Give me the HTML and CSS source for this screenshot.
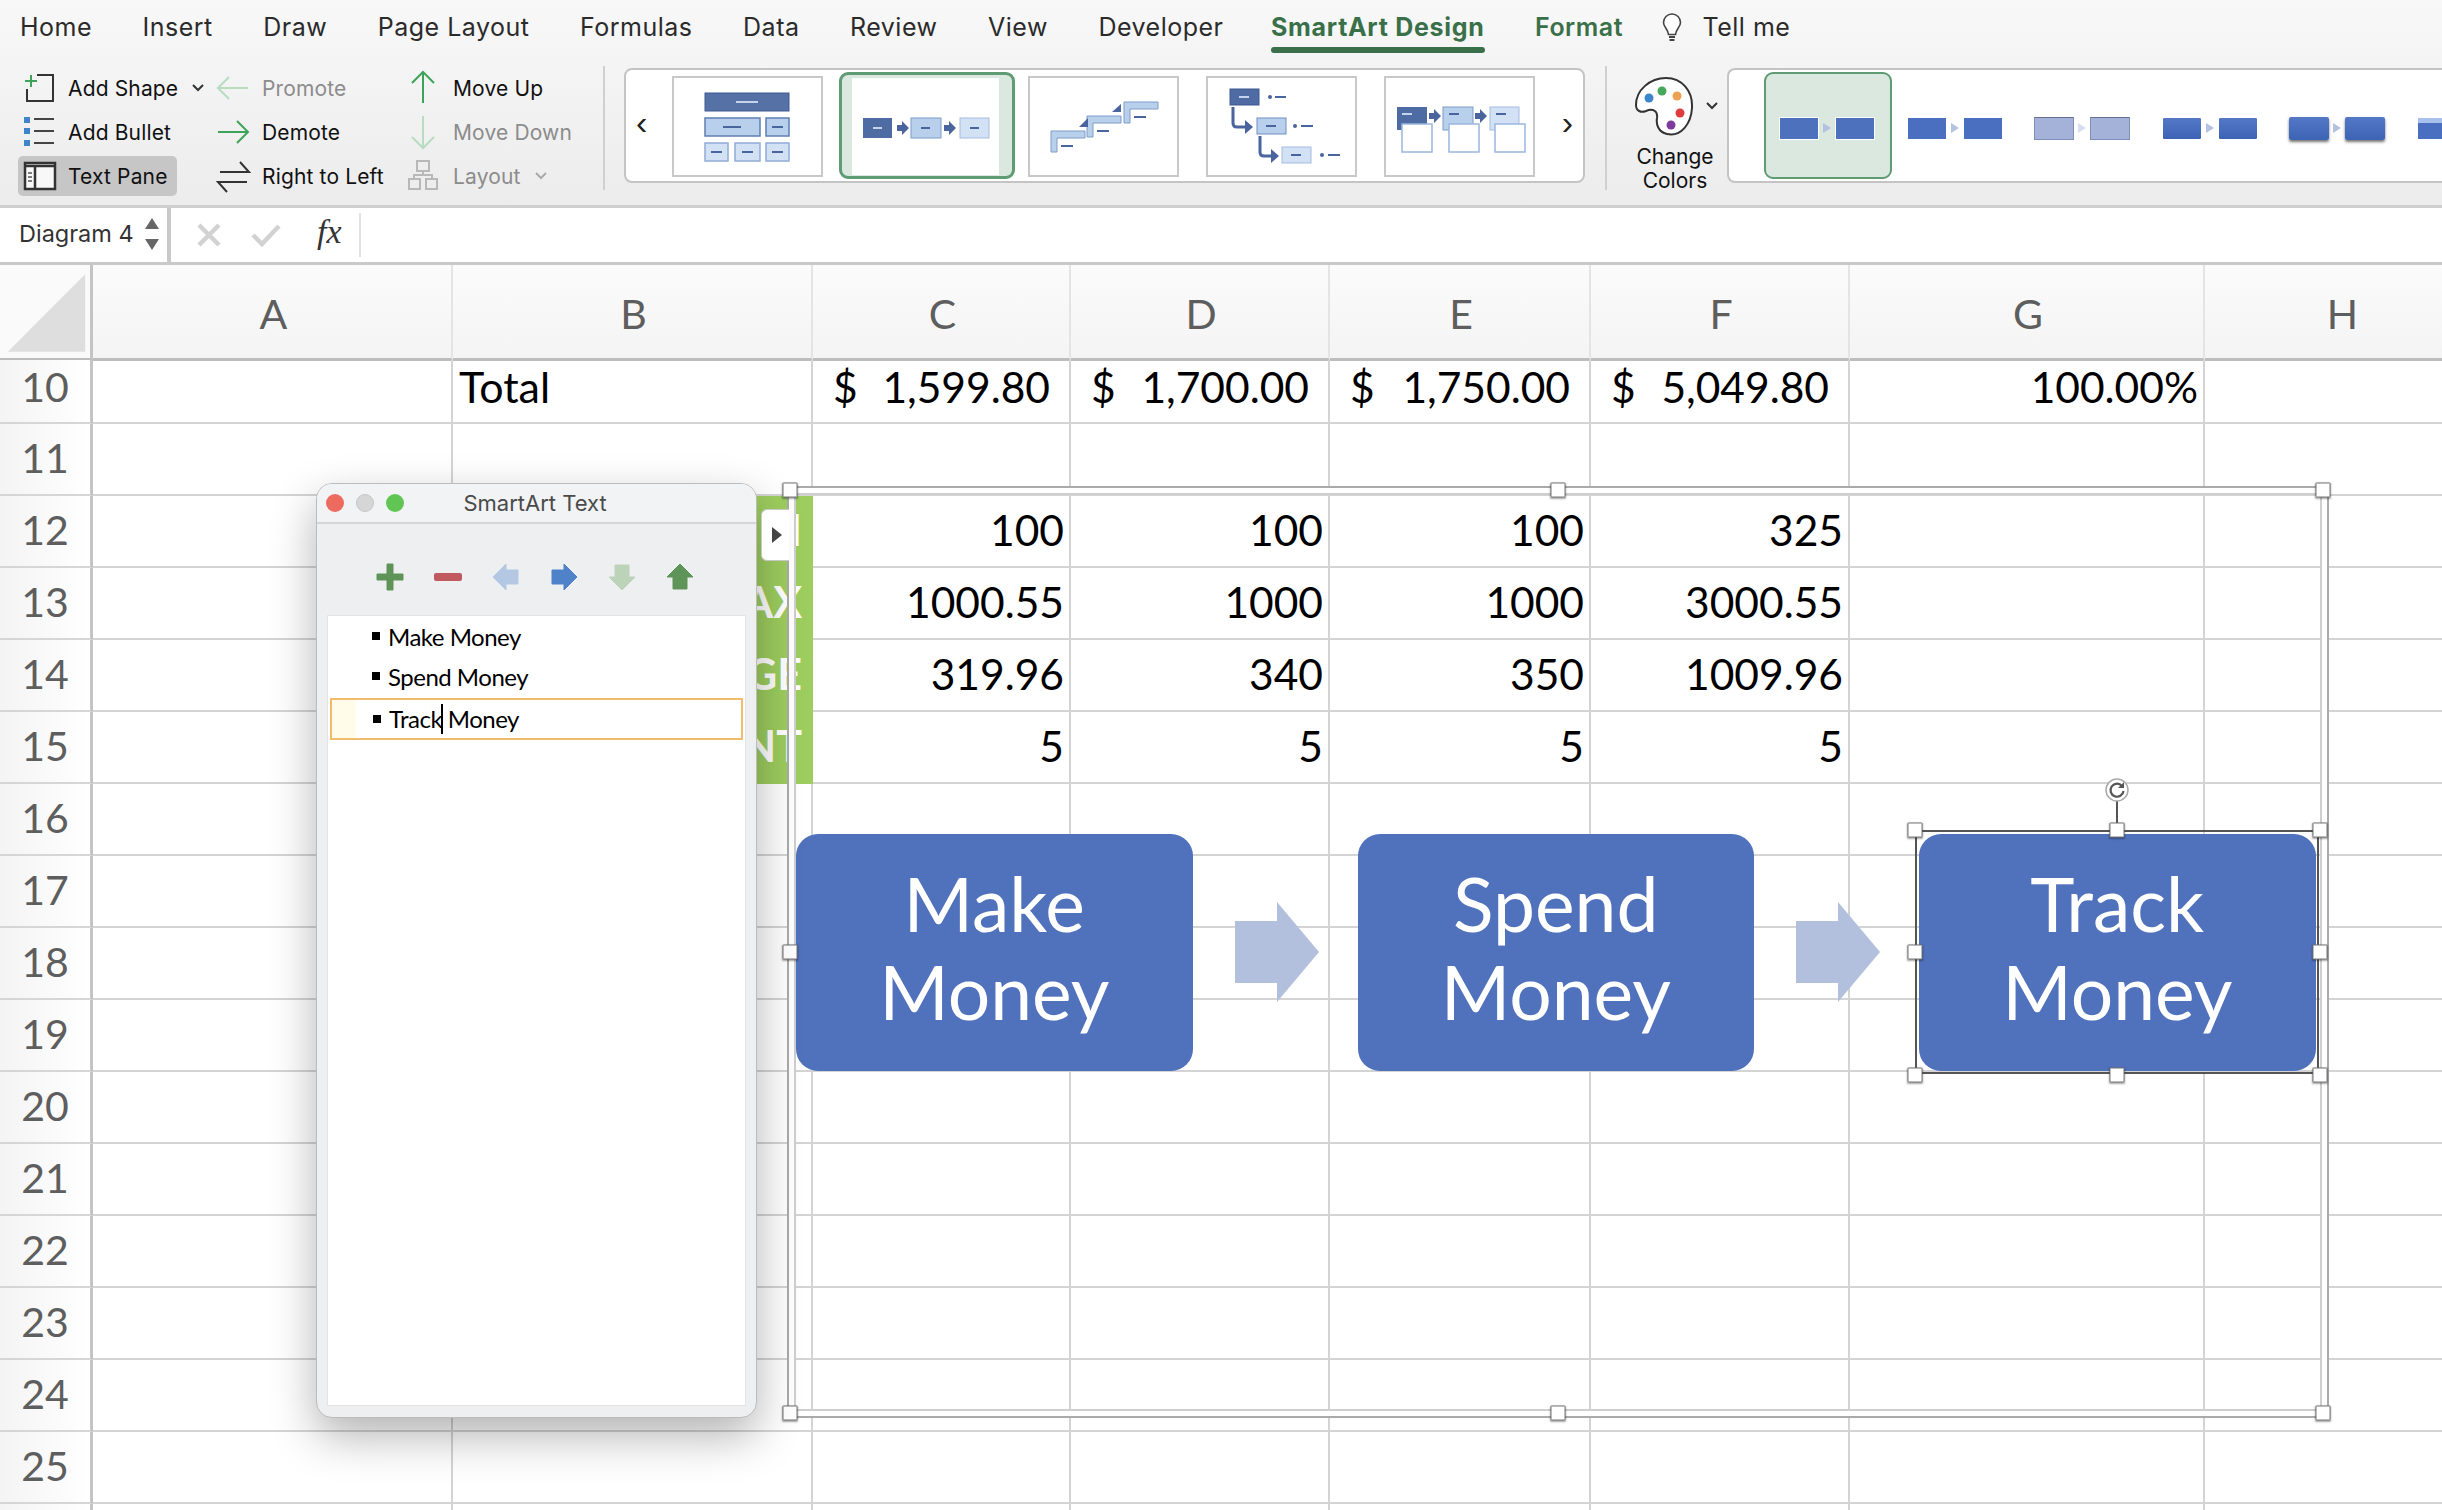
FILE: index.html
```html
<!DOCTYPE html>
<html lang="en">
<head>
<meta charset="utf-8">
<title>SmartArt Design</title>
<link rel="stylesheet" href="styles.css">
</head>
<body>
<div class="app">
  <header class="ribbon">
    <nav class="tabs">
      <span class="tab">Home</span><span class="tab">Insert</span><span class="tab">Draw</span><span class="tab">Page Layout</span><span class="tab">Formulas</span><span class="tab">Data</span><span class="tab">Review</span><span class="tab">View</span><span class="tab">Developer</span>
      <span class="tab tab-active">SmartArt Design</span><span class="tab tab-green">Format</span>
      <span class="tell">
        <svg class="bulb" viewBox="0 0 22 30" width="22" height="30"><path d="M11 2a8.500 8.500 0 0 0-8.500 8.500c0 4.500 4.500 6.500 5 12h7c.5-5.500 5-7.500 5-12A8.500 8.500 0 0 0 11 2z" fill="#fff" stroke="#444" stroke-width="1.600"/><path d="M8 25h6M8.500 28h5" stroke="#444" stroke-width="2"/></svg>
        <span class="tab">Tell me</span>
      </span>
    </nav>
    <div class="tools">
      <div class="cmds">
        <div class="cmd"><svg class="ic" viewBox="0 0 35 36" width="35" height="36"><path d="M14 5H30V31H4V19" fill="none" stroke="#333" stroke-width="2"/><path d="M8 5v12M2 11h12" stroke="#3ea35a" stroke-width="2"/></svg><span>Add Shape</span><svg class="chev" viewBox="0 0 12 8" width="12" height="8"><path d="M1 1l5 5 5-5" fill="none" stroke="#333" stroke-width="2"/></svg></div>
        <div class="cmd dim"><svg class="ic" viewBox="0 0 35 36" width="35" height="36"><path d="M31 18H1M12 7L1 18l11 11" fill="none" stroke="#b7dcc0" stroke-width="2"/></svg><span>Promote</span></div>
        <div class="cmd"><svg class="ic" viewBox="0 0 35 36" width="35" height="36"><path d="M15 33V2M4 13L15 2l11 11" fill="none" stroke="#3ea35a" stroke-width="2"/></svg><span>Move Up</span></div>
        <div class="cmd"><svg class="ic" viewBox="0 0 35 36" width="35" height="36"><rect x="1" y="3" width="6" height="6" fill="#3f85c9"/><rect x="1" y="14" width="6" height="6" fill="#3f85c9"/><rect x="1" y="26" width="6" height="6" fill="#3f85c9"/><path d="M11 5h20M11 17h20M11 29h20" stroke="#444" stroke-width="2"/></svg><span>Add Bullet</span></div>
        <div class="cmd"><svg class="ic" viewBox="0 0 35 36" width="35" height="36"><path d="M1 18h30M20 7l11 11-11 11" fill="none" stroke="#3ea35a" stroke-width="2"/></svg><span>Demote</span></div>
        <div class="cmd dim"><svg class="ic" viewBox="0 0 35 36" width="35" height="36"><path d="M15 2v32M4 23l11 11 11-11" fill="none" stroke="#b7dcc0" stroke-width="2"/></svg><span>Move Down</span></div>
        <div class="cmd cmd-on"><svg class="ic" viewBox="0 0 35 36" width="35" height="36"><rect x="2" y="5" width="30" height="26" fill="#f8f8f8" stroke="#333" stroke-width="2.500"/><path d="M2 8h30M12 8v23" stroke="#333" stroke-width="2.500"/><path d="M5 15h4M5 19h4M5 23h4" stroke="#555" stroke-width="1.500"/></svg><span>Text Pane</span></div>
        <div class="cmd"><svg class="ic" viewBox="0 0 35 36" width="35" height="36"><path d="M3 14H32L23 4M30 24H1l9 10" fill="none" stroke="#333" stroke-width="2"/></svg><span>Right to Left</span></div>
        <div class="cmd dim"><svg class="ic" viewBox="0 0 35 36" width="35" height="36"><g fill="none" stroke="#b8b8b8" stroke-width="2"><rect x="9" y="3" width="12" height="10"/><rect x="1" y="21" width="11" height="10"/><rect x="18" y="21" width="11" height="10"/><path d="M15 13v4M6 21v-4h18v4"/></g></svg><span>Layout</span><svg class="chev" viewBox="0 0 12 8" width="12" height="8"><path d="M1 1l5 5 5-5" fill="none" stroke="#aaa" stroke-width="2"/></svg></div>
      </div>
      <div class="vsep"></div>
      <div class="gallery layouts">
        <span class="nav">&#8249;</span>
        <div class="thumb">
          <svg viewBox="0 0 147 97" width="147" height="97"><g transform="translate(-2 -2)">
            <rect x="33" y="17" width="84" height="18" fill="#5571a6" stroke="#3f5a94"/><path d="M64 26h22" stroke="#c5d4ea" stroke-width="2"/>
            <rect x="33" y="42" width="55" height="18" fill="#b9d0ec" stroke="#5f7fb2" stroke-width="1.500"/><path d="M51 51h18" stroke="#4a659e" stroke-width="2"/>
            <rect x="94" y="42" width="23" height="18" fill="#b9d0ec" stroke="#5f7fb2" stroke-width="1.500"/><path d="M100 51h11" stroke="#4a659e" stroke-width="2"/>
            <rect x="33" y="67" width="23" height="18" fill="#d3e1f4" stroke="#90acd6" stroke-width="1.500"/><rect x="63" y="67" width="25" height="18" fill="#d3e1f4" stroke="#90acd6" stroke-width="1.500"/><rect x="94" y="67" width="23" height="18" fill="#d3e1f4" stroke="#90acd6" stroke-width="1.500"/>
            <path d="M39 76h11M70 76h11M100 76h11" stroke="#4a659e" stroke-width="2"/></g></svg>
        </div>
        <div class="thumb thumb-sel">
          <svg viewBox="0 0 147 97" width="147" height="97"><g transform="translate(-2 -2)">
            <rect x="13" y="42" width="29" height="20" fill="#4f6ba3"/><path d="M23 52h9" stroke="#c5d4ea" stroke-width="2"/>
            <path d="M47 49h5v-4l7 7-7 7v-4h-5z" fill="#4a659e"/>
            <rect x="61" y="42" width="30" height="20" fill="#b9d0ec" stroke="#7e9cc8"/><path d="M71 52h9" stroke="#4a659e" stroke-width="2"/>
            <path d="M94 49h5v-4l7 7-7 7v-4h-5z" fill="#4a659e"/>
            <rect x="110" y="42" width="29" height="20" fill="#d3e1f4" stroke="#a5bde0"/><path d="M120 52h9" stroke="#4a659e" stroke-width="2"/></g></svg>
        </div>
        <div class="thumb">
          <svg viewBox="0 0 147 97" width="147" height="97"><g transform="translate(-2 -2)" fill="#b9d0ec" stroke="#7e9cc8">
            <path d="M23 55h34v7H29v14h-6z"/><path d="M59 40h34v7H65v14h-6z"/><path d="M96 26h34v7h-28v14h-6z"/>
            <path d="M51 51l9-9v9zM84 36l9-8v8z" fill="#4a659e" stroke="none"/>
            <path d="M33 70h12M69 55h12M106 41h12" stroke="#4a659e" stroke-width="2"/></g></svg>
        </div>
        <div class="thumb">
          <svg viewBox="0 0 147 97" width="147" height="97"><g transform="translate(-2 -2)">
            <rect x="24" y="13" width="29" height="16" fill="#4f6ba3" stroke="#3f5a94"/><path d="M33 21h10" stroke="#c5d4ea" stroke-width="2"/><circle cx="64" cy="21" r="2" fill="#4a659e"/><path d="M69 21h11" stroke="#4a659e" stroke-width="2"/>
            <path d="M27 31v16q0 4 4 4h9" fill="none" stroke="#4a659e" stroke-width="3"/><path d="M39 44l8 7-8 7z" fill="#4a659e"/>
            <rect x="51" y="42" width="29" height="16" fill="#b9d0ec" stroke="#6f8fc0"/><path d="M60 50h10" stroke="#4a659e" stroke-width="2"/><circle cx="89" cy="50" r="2" fill="#4a659e"/><path d="M95 50h12" stroke="#4a659e" stroke-width="2"/>
            <path d="M54 60v16q0 4 4 4h8" fill="none" stroke="#4a659e" stroke-width="3"/><path d="M65 73l8 7-8 7z" fill="#4a659e"/>
            <rect x="76" y="71" width="29" height="16" fill="#d3e1f4" stroke="#a5bde0"/><path d="M85 79h10" stroke="#4a659e" stroke-width="2"/><circle cx="116" cy="79" r="2" fill="#4a659e"/><path d="M122 79h12" stroke="#4a659e" stroke-width="2"/></g></svg>
        </div>
        <div class="thumb">
          <svg viewBox="0 0 147 97" width="147" height="97"><g transform="translate(-2 -2)">
            <rect x="13" y="31" width="30" height="23" fill="#4f6ba3"/><path d="M18 38h10" stroke="#c5d4ea" stroke-width="2"/><rect x="18" y="48" width="30" height="28" fill="#fff" stroke="#9ab6de" stroke-width="1.500"/>
            <path d="M45 37h5v-4l7 7-7 7v-4h-5z" fill="#4a659e"/>
            <rect x="59" y="31" width="30" height="23" fill="#b9d0ec" stroke="#7e9cc8"/><path d="M65 38h10" stroke="#4a659e" stroke-width="2"/><rect x="65" y="48" width="30" height="28" fill="#fff" stroke="#9ab6de" stroke-width="1.500"/>
            <path d="M91 37h5v-4l7 7-7 7v-4h-5z" fill="#4a659e"/>
            <rect x="106" y="31" width="29" height="23" fill="#d3e1f4" stroke="#a5bde0"/><path d="M112 38h10" stroke="#4a659e" stroke-width="2"/><rect x="111" y="48" width="30" height="28" fill="#fff" stroke="#9ab6de" stroke-width="1.500"/></g></svg>
        </div>
        <span class="nav nav-next">&#8250;</span>
      </div>
      <div class="vsep vsep2"></div>
      <div class="colors">
        <div class="palette-row">
          <svg viewBox="0 0 60 60" width="60" height="60"><path d="M32 2C16 2 2 14 2 29c0 6 5 8 10 6 7-3 12 0 11 7-1 6 1 14 10 16 14 3 24-10 25-26C59 15 48 2 32 2z" fill="#fff" stroke="#333" stroke-width="2"/><circle cx="15" cy="22" r="4.500" fill="#3f85c9"/><circle cx="28" cy="15" r="4.500" fill="#46a85a"/><circle cx="43" cy="20" r="4.500" fill="#eca253"/><circle cx="46" cy="37" r="4.500" fill="#de3d3d"/><circle cx="37" cy="49" r="4.500" fill="#7d3b9e"/></svg>
          <svg class="chev-pal" viewBox="0 0 12 8" width="12" height="8"><path d="M1 1l5 5 5-5" fill="none" stroke="#333" stroke-width="2"/></svg>
        </div>
        <div class="colors-label">Change<br>Colors</div>
      </div>
      <div class="gallery styles">
        <div class="style style-sel"><span class="sq"></span><span class="ar"></span><span class="sq"></span></div>
        <div class="style"><span class="sq sq-flat"></span><span class="ar"></span><span class="sq sq-flat"></span></div>
        <div class="style"><span class="sq sq-soft"></span><span class="ar ar-soft"></span><span class="sq sq-soft"></span></div>
        <div class="style"><span class="sq sq-grad"></span><span class="ar"></span><span class="sq sq-grad"></span></div>
        <div class="style"><span class="sq sq-shadow"></span><span class="ar"></span><span class="sq sq-shadow"></span></div>
        <div class="style"><span class="sq sq-bevel"></span></div>
      </div>
    </div>
  </header>

  <div class="formula">
    <div class="namebox"><span>Diagram 4</span>
      <svg viewBox="0 0 16 36" width="16" height="36"><path d="M8 2l7 11H1zM8 34L1 23h14z" fill="#666"/></svg>
    </div>
    <div class="fbtns">
      <svg class="fx-ic" viewBox="0 0 24 24" width="24" height="24"><path d="M2 2l20 20M22 2L2 22" stroke="#d2d2d2" stroke-width="4.500"/></svg>
      <svg class="fx-ic" viewBox="0 0 30 24" width="30" height="24"><path d="M2 12l9 9L28 3" fill="none" stroke="#d2d2d2" stroke-width="4.500"/></svg>
      <span class="fx">fx</span>
    </div>
  </div>

  <main class="sheet">
    <div class="row row-head">
      <div class="rh corner"><svg viewBox="0 0 93 93" width="93" height="93"><path d="M8 88L88 8v80z" fill="#dedede"/></svg></div>
      <div class="ch">A</div><div class="ch">B</div><div class="ch">C</div><div class="ch">D</div><div class="ch">E</div><div class="ch">F</div><div class="ch">G</div><div class="ch">H</div>
    </div>
    <div class="row row-10">
      <div class="rh">10</div><div class="c"></div><div class="c">Total</div>
      <div class="c acc"><span>$</span><span>1,599.80</span></div><div class="c acc"><span>$</span><span>1,700.00</span></div><div class="c acc"><span>$</span><span>1,750.00</span></div><div class="c acc"><span>$</span><span>5,049.80</span></div>
      <div class="c num">100.00%</div><div class="c"></div>
    </div>
    <div class="row"><div class="rh">11</div><div class="c"></div><div class="c"></div><div class="c"></div><div class="c"></div><div class="c"></div><div class="c"></div><div class="c"></div><div class="c"></div></div>
    <div class="row"><div class="rh">12</div><div class="c"></div><div class="c lbl">I</div><div class="c num">100</div><div class="c num">100</div><div class="c num">100</div><div class="c num">325</div><div class="c"></div><div class="c"></div></div>
    <div class="row"><div class="rh">13</div><div class="c"></div><div class="c lbl">AX</div><div class="c num">1000.55</div><div class="c num">1000</div><div class="c num">1000</div><div class="c num">3000.55</div><div class="c"></div><div class="c"></div></div>
    <div class="row"><div class="rh">14</div><div class="c"></div><div class="c lbl">GE</div><div class="c num">319.96</div><div class="c num">340</div><div class="c num">350</div><div class="c num">1009.96</div><div class="c"></div><div class="c"></div></div>
    <div class="row"><div class="rh">15</div><div class="c"></div><div class="c lbl">NT</div><div class="c num">5</div><div class="c num">5</div><div class="c num">5</div><div class="c num">5</div><div class="c"></div><div class="c"></div></div>
    <div class="row"><div class="rh">16</div><div class="c"></div><div class="c"></div><div class="c"></div><div class="c"></div><div class="c"></div><div class="c"></div><div class="c"></div><div class="c"></div></div>
    <div class="row"><div class="rh">17</div><div class="c"></div><div class="c"></div><div class="c"></div><div class="c"></div><div class="c"></div><div class="c"></div><div class="c"></div><div class="c"></div></div>
    <div class="row"><div class="rh">18</div><div class="c"></div><div class="c"></div><div class="c"></div><div class="c"></div><div class="c"></div><div class="c"></div><div class="c"></div><div class="c"></div></div>
    <div class="row"><div class="rh">19</div><div class="c"></div><div class="c"></div><div class="c"></div><div class="c"></div><div class="c"></div><div class="c"></div><div class="c"></div><div class="c"></div></div>
    <div class="row"><div class="rh">20</div><div class="c"></div><div class="c"></div><div class="c"></div><div class="c"></div><div class="c"></div><div class="c"></div><div class="c"></div><div class="c"></div></div>
    <div class="row"><div class="rh">21</div><div class="c"></div><div class="c"></div><div class="c"></div><div class="c"></div><div class="c"></div><div class="c"></div><div class="c"></div><div class="c"></div></div>
    <div class="row"><div class="rh">22</div><div class="c"></div><div class="c"></div><div class="c"></div><div class="c"></div><div class="c"></div><div class="c"></div><div class="c"></div><div class="c"></div></div>
    <div class="row"><div class="rh">23</div><div class="c"></div><div class="c"></div><div class="c"></div><div class="c"></div><div class="c"></div><div class="c"></div><div class="c"></div><div class="c"></div></div>
    <div class="row"><div class="rh">24</div><div class="c"></div><div class="c"></div><div class="c"></div><div class="c"></div><div class="c"></div><div class="c"></div><div class="c"></div><div class="c"></div></div>
    <div class="row"><div class="rh">25</div><div class="c"></div><div class="c"></div><div class="c"></div><div class="c"></div><div class="c"></div><div class="c"></div><div class="c"></div><div class="c"></div></div>
    <div class="row"><div class="rh"></div><div class="c"></div><div class="c"></div><div class="c"></div><div class="c"></div><div class="c"></div><div class="c"></div><div class="c"></div><div class="c"></div></div>
  </main>

  <section class="smartart">
    <i class="hd hd-tl"></i><i class="hd hd-tc"></i><i class="hd hd-tr"></i><i class="hd hd-ml"></i><i class="hd hd-bl"></i><i class="hd hd-bc"></i><i class="hd hd-br"></i>
    <div class="shape">Make<br>Money</div>
    <div class="slot"><svg viewBox="0 0 84 100" width="84" height="100"><path d="M0 19h42V0l42 50-42 50V81H0z" fill="#b2bfdd"/></svg></div>
    <div class="shape">Spend<br>Money</div>
    <div class="slot"><svg viewBox="0 0 84 100" width="84" height="100"><path d="M0 19h42V0l42 50-42 50V81H0z" fill="#b2bfdd"/></svg></div>
    <div class="shape shape-sel">Track<br>Money
      <i class="hd s-tl"></i><i class="hd s-tc"></i><i class="hd s-tr"></i><i class="hd s-ml"></i><i class="hd s-mr"></i><i class="hd s-bl"></i><i class="hd s-bc"></i><i class="hd s-br"></i>
      <svg class="rotate" viewBox="0 0 26 50" width="26" height="50"><path d="M13 24v26" stroke="#555" stroke-width="2"/><circle cx="13" cy="13" r="11" fill="#fff" stroke="#aaa" stroke-width="1.500"/><path d="M18 9a6.500 6.500 0 1 0 1.500 5" fill="none" stroke="#555" stroke-width="2.200"/><path d="M20 5v6h-6z" fill="#555"/></svg>
    </div>
  </section>

  <aside class="pane">
    <div class="pane-title">
      <div class="lights"><i class="light l-red"></i><i class="light l-gray"></i><i class="light l-green"></i></div>
      <span>SmartArt Text</span>
    </div>
    <div class="pane-tools">
      <svg viewBox="0 0 28 28" width="28" height="28"><path d="M11 1h6v10h10v6H17v10h-6V17H1v-6h10z" fill="#5f9458" stroke="#5f9458" stroke-linejoin="round"/></svg>
      <svg viewBox="0 0 28 28" width="28" height="28"><rect x="0" y="10" width="28" height="8" rx="2" fill="#c05a5e"/></svg>
      <svg viewBox="0 0 28 28" width="28" height="28"><path d="M1 14L14 1v6h12v14H14v6z" fill="#b4c8e4" stroke="#b4c8e4" stroke-linejoin="round"/></svg>
      <svg viewBox="0 0 28 28" width="28" height="28"><path d="M27 14L14 1v6H2v14h12v6z" fill="#4f82c8" stroke="#4f82c8" stroke-linejoin="round"/></svg>
      <svg viewBox="0 0 28 28" width="28" height="28"><path d="M14 27L1 14h6V2h14v12h6z" fill="#bcd2b9" stroke="#bcd2b9" stroke-linejoin="round"/></svg>
      <svg viewBox="0 0 28 28" width="28" height="28"><path d="M14 1L1 14h6v12h14V14h6z" fill="#5f9458" stroke="#5f9458" stroke-linejoin="round"/></svg>
    </div>
    <div class="pane-list">
      <div class="item"><i class="bullet"></i>Make Money</div>
      <div class="item"><i class="bullet"></i>Spend Money</div>
      <div class="item item-sel"><i class="bullet"></i>Track<b class="caret"></b> Money</div>
    </div>
    <div class="pane-toggle"><svg viewBox="0 0 10 16" width="10" height="16"><path d="M0 0l10 8-10 8z" fill="#444"/></svg></div>
  </aside>
</div>
</body>
</html>
```

FILE: styles.css
```css
* { box-sizing: border-box; }
html, body { margin: 0; padding: 0; background: #fff; }
.app { position: relative; width: 2442px; height: 1510px; overflow: hidden; font-family: "Lato", "Liberation Sans", sans-serif; color: #000; }

/* Ribbon */
.ribbon { height: 208px; background: linear-gradient(#f8f8f8, #ececec); border-bottom: 3px solid #cfcfcf; font-family: "Inter", "Liberation Sans", sans-serif; }
.tabs { display: flex; align-items: flex-start; height: 54px; padding: 12px 0 0 20px; gap: 50.500px; }
.tab { position: relative; font-size: 25px; letter-spacing: .5px; line-height: 30px; color: #2b2b2b; white-space: nowrap; }
.tab-active { color: #3a7049; font-weight: 700; letter-spacing: .7px; margin-left: -3px; }
.tab-active::after { content: ""; position: absolute; left: 0; right: 0; top: 35px; height: 6px; border-radius: 3px; background: #3a7049; }
.tab-green { color: #3a7049; font-weight: 600; }
.tell { display: flex; align-items: center; gap: 19px; margin-left: -12px; }
.bulb { flex: none; }

.tools { display: flex; align-items: flex-start; height: 132px; padding: 12px 0 0 18px; }
.cmds { display: grid; grid-template-columns: 194px 191px 195px; grid-auto-rows: 40px; row-gap: 4px; margin-top: 2px; width: 580px; }
.cmd { display: flex; align-items: center; font-size: 21px; letter-spacing: .15px; color: #111; white-space: nowrap; }
.cmd .ic { flex: none; margin: 0 10px 0 5px; overflow: visible; }
.cmd.dim { color: #8c8c8c; }
.cmd-on { width: 159px; border-radius: 5px; background: #c6c6c6; }
.chev { margin-left: 14px; flex: none; }

.vsep { width: 2px; height: 124px; background: #d0d0d0; margin: 0 0 0 5px; flex: none; }
.vsep2 { margin-left: 20px; }

.gallery { flex: none; height: 115px; margin-top: 2px; background: #fff; border: 2px solid #c4c4c4; border-radius: 8px; }
.layouts { position: relative; display: flex; align-items: center; gap: 27px; width: 961px; margin-left: 19px; padding: 2px 0 0 46px; }
.nav { position: absolute; left: 10px; top: 30px; font-family: "Liberation Sans", sans-serif; font-size: 34px; line-height: 44px; color: #222; }
.nav-next { left: auto; right: 10px; }
.thumb { position: relative; flex: none; width: 151px; height: 101px; border: 2px solid #c8c8c8; background: #fff; z-index: 1; }
.thumb svg { display: block; }
.thumb-sel::before { content: ""; position: absolute; inset: -6px -16px -4px -13px; border: 3px solid #5f9b73; border-radius: 9px; background: #dbe8df; z-index: -1; }
.thumb-sel { background: transparent; }
.thumb-sel svg { background: #fff; }

.colors { flex: none; width: 110px; margin-left: 10px; text-align: center; font-size: 21px; line-height: 24px; color: #111; }
.palette-row { display: flex; align-items: center; height: 66px; margin-top: 7px; padding-left: 17px; }
.chev-pal { margin-left: 12px; }
.colors-label { margin-top: 6px; padding-left: 6px; }
.styles { display: flex; width: 800px; padding-left: 35px; border-right: 0; border-radius: 8px 0 0 8px; overflow: hidden; }
.style { position: relative; flex: none; display: flex; align-items: center; width: 127.500px; height: 107px; margin-top: 2px; padding: 5px 0 0 15px; }
.style-sel { border: 2px solid #5f9b73; border-radius: 9px; background: #dbe8df; padding-left: 13px; }
.sq { flex: none; width: 40px; height: 23px; background: #4e71bd; border: 1px solid #fff; }
.sq-flat { background: #4a6fc0; }
.sq-soft { background: #a4b2da; border-color: #7f8fb5; border-top-color: #666f8f; }
.sq-grad { background: linear-gradient(#5478c6, #3d63b5); border-radius: 2px; }
.sq-shadow { background: linear-gradient(#5478c6, #3d63b5); border: 0; border-radius: 2px; box-shadow: 0 2px 3px rgba(0,0,0,.55); }
.sq-bevel { background: linear-gradient(#a8c0ec 0 5px, #4a6fc0 5px); }
.ar { flex: none; width: 16px; height: 10px; position: relative; }
.ar::before { content: ""; position: absolute; left: 4px; top: 0; border-left: 8px solid #b5c1e1; border-top: 5px solid transparent; border-bottom: 5px solid transparent; }
.ar-soft::before { border-left-color: #d8deef; }

/* Formula bar */
.formula { display: flex; height: 57px; background: #fff; border-bottom: 3px solid #c9c9c9; font-family: "Inter", "Liberation Sans", sans-serif; }
.namebox { display: flex; align-items: center; justify-content: space-between; width: 171px; height: 100%; padding: 0 7px 3px 19px; border-right: 4px solid #c9c9c9; font-size: 23.500px; color: #333; }
.fbtns { display: flex; align-items: center; padding-left: 26px; gap: 30px; }
.fx { font-family: "Liberation Serif", serif; font-style: italic; font-size: 34px; color: #333; padding: 0 17px 6px 0; border-right: 2px solid #e2e2e2; line-height: 38px; margin-left: 6px; }

/* Sheet */
.row { display: grid; grid-template-columns: 93px 360px 360px 258px 259px 261px 259px 355px 274px; height: 72px; }
.row-head { height: 95px; }
.row-10 { height: 64px; }
.rh { display: flex; align-items: center; justify-content: center; padding-bottom: 3px; font-size: 41px; color: #5e5e5e; background: linear-gradient(90deg, #f4f4f4, #fff); border-right: 3px solid #c4c4c4; border-bottom: 2px solid #d6d6d6; }
.row-10 .rh, .row-10 .c { padding-bottom: 9px; }
.corner svg { display: block; }
.corner { padding-bottom: 0; border-bottom: 3px solid #bdbdbd; background: #fafafa; }
.ch { display: flex; align-items: center; justify-content: center; padding: 3px 0 0 3px; font-size: 41px; color: #5e5e5e; background: linear-gradient(#fbfbfb, #f4f4f4); border-right: 2px solid #e4e4e4; border-bottom: 3px solid #bdbdbd; }
.c { display: flex; align-items: center; min-width: 0; padding-left: 6px; padding-bottom: 3px; font-size: 43px; color: #000; border-right: 2px solid #d4d4d4; border-bottom: 2px solid #d4d4d4; }
.acc { justify-content: space-between; padding-left: 20px; padding-right: 19px; font-size: 42.500px; }
.num { justify-content: flex-end; padding-left: 0; padding-right: 5px; font-size: 42.500px; }
.lbl { justify-content: flex-end; padding-left: 0; padding-right: 9px; background: #9dcd5e; border-color: #9dcd5e; color: #fff; font-weight: 700; }

/* SmartArt frame */
.smartart { position: absolute; left: 789px; top: 488px; width: 1538px; height: 928px; display: flex; align-items: center; padding-left: 2px; border: 5px solid #fff; outline: 2px solid #aaa; box-shadow: inset 0 0 0 2px #cfcfcf; }
.hd { position: absolute; width: 15px; height: 15px; background: #fff; border: 1px solid #777; border-radius: 1px; box-shadow: 0 1px 2px rgba(0,0,0,.35); transform: translate(-50%, -50%); z-index: 3; }
.hd-tl { left: -4px; top: -3px; } .hd-tc { left: 50%; top: -3px; } .hd-tr { left: calc(100% + 1px); top: -3px; }
.hd-ml { left: -4px; top: 50%; }
.hd-bl { left: -4px; top: calc(100% + 2px); } .hd-bc { left: 50%; top: calc(100% + 2px); } .hd-br { left: calc(100% + 1px); top: calc(100% + 2px); }
.shape { position: relative; flex: none; width: 396.500px; height: 237px; padding-top: 25px; border-radius: 22px; background: #5071bc; color: #fff; font-size: 75px; line-height: 88px; text-align: center; }
.slot { flex: none; width: 165px; display: flex; justify-content: center; padding-left: 3px; }
.slot svg { display: block; }
.shape-sel::before { content: ""; position: absolute; inset: -4px -3px -3px -4px; border: 2px solid #555; }
.s-tl { left: -4px; top: -4px; } .s-tc { left: 50%; top: -4px; } .s-tr { left: calc(100% + 4px); top: -4px; }
.s-ml { left: -4px; top: 50%; } .s-mr { left: calc(100% + 4px); top: 50%; }
.s-bl { left: -4px; top: calc(100% + 4px); } .s-bc { left: 50%; top: calc(100% + 4px); } .s-br { left: calc(100% + 4px); top: calc(100% + 4px); }
.rotate { position: absolute; left: 50%; top: -57px; transform: translateX(-50%); z-index: 2; }

/* Text pane */
.pane { position: absolute; left: 316px; top: 483px; width: 441px; height: 935px; display: flex; flex-direction: column; background: #eeeff1; border: 1px solid #bcbcbc; border-radius: 16px; box-shadow: 0 18px 46px rgba(0,0,0,.3); font-family: "Inter", "Liberation Sans", sans-serif; z-index: 5; }
.pane-title { position: relative; flex: none; display: flex; align-items: center; justify-content: center; height: 40px; padding-right: 3px; background: #f2f3f5; border-bottom: 2px solid #d4d5d7; border-radius: 15px 15px 0 0; font-size: 22px; color: #4a4a4a; }
.lights { position: absolute; left: 9px; top: 10px; display: flex; gap: 12px; }
.light { display: block; width: 18px; height: 18px; border-radius: 50%; }
.l-red { background: #ed6a5e; } .l-gray { background: #d6d6d6; border: 1px solid #c6c6c6; } .l-green { background: #61c554; }
.pane-tools { flex: none; display: flex; align-items: center; gap: 30px; height: 91px; padding: 14px 0 0 59px; }
.pane-tools svg { flex: none; overflow: visible; }
.pane-list { flex: 1; margin: 0 10px 11px 10px; background: #fff; border: 1px solid #e4e4e4; font-family: "Lato", "Liberation Sans", sans-serif; font-size: 24px; letter-spacing: -.5px; color: #000; }
.item { display: flex; align-items: center; height: 40px; padding-left: 44px; }
.bullet { flex: none; width: 8px; height: 8px; margin-right: 8px; background: #000; }
.item-sel { position: relative; height: 42px; margin: 2px 2px 0; padding: 0 0 1px 41px; border: 2px solid #f3bb6c; background: linear-gradient(90deg, #fffde9 24px, #fff 24px); white-space: pre; }
.caret { display: inline-block; width: 2px; height: 30px; background: #000; margin: 0 -1px; }
.pane-toggle { position: absolute; left: 444px; top: 25px; display: flex; align-items: center; padding-left: 10px; width: 28px; height: 52px; background: #fff; border: 1px solid #c8c8c8; border-right: 0; border-radius: 6px 0 0 6px; }
```
